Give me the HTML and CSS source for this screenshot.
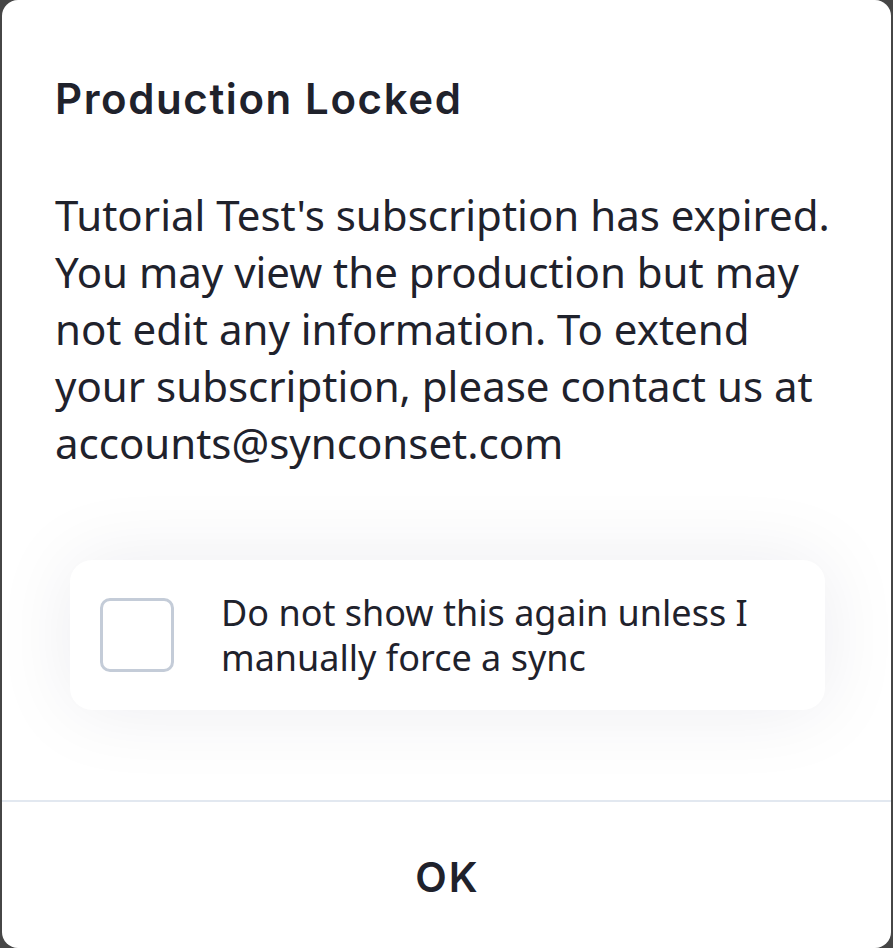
FILE: index.html
```html
<!DOCTYPE html>
<html>
<head>
<meta charset="utf-8">
<link rel="stylesheet" href="styles.css">
</head>
<body>
<div class="dialog">
  <div class="content">
    <h1 class="title">Production Locked</h1>
    <p class="message">Tutorial Test's subscription has expired. You may view the production but may not edit any information. To extend your subscription, please contact us at accounts@synconset.com</p>
    <label class="option">
      <span class="box"></span>
      <span class="option-text">Do not show this again unless I manually force a sync</span>
    </label>
  </div>
  <div class="footer">
    <button class="ok">OK</button>
  </div>
</div>
</body>
</html>
```
FILE: styles.css
```css
html, body {
  margin: 0;
  padding: 0;
  background: #464646;
  height: 948px;
  overflow: hidden;
}
.dialog {
  margin: 0 2px;
  height: 948px;
  background: #fff;
  border-radius: 16px;
  display: flex;
  flex-direction: column;
  overflow: hidden;
}
.content {
  flex: 1;
  padding: 0 48px 0 53px;
}
.title {
  margin: 0;
  padding-top: 74px;
  font-family: Inter, sans-serif;
  font-weight: 600;
  font-size: 42px;
  line-height: 50px;
  letter-spacing: 1.6px;
  color: #1f222c;
}
.message {
  margin: 62px 0 0;
  font-family: "Noto Sans", sans-serif;
  font-size: 42px;
  line-height: 57px;
  color: #1f222c;
}
.option {
  margin: 89px 18px 0 15px;
  background: #fff;
  border-radius: 22px;
  box-shadow: 0 0 80px rgba(20, 30, 60, 0.08);
  display: flex;
  align-items: center;
  gap: 47px;
  padding: 0 30px;
  height: 150px;
}
.box {
  flex: none;
  width: 68px;
  height: 68px;
  border: 3px solid #c4ccd8;
  border-radius: 10px;
}
.option-text {
  font-family: "Noto Sans", sans-serif;
  font-size: 36px;
  line-height: 45px;
  color: #1f222c;
}
.footer {
  border-top: 2px solid #e2e8f0;
  height: 146px;
  display: flex;
  align-items: center;
  justify-content: center;
}
.ok {
  border: 0;
  background: none;
  font-family: Inter, sans-serif;
  font-weight: 600;
  font-size: 41px;
  letter-spacing: 2px;
  color: #1f222c;
  padding: 0 0 0 2px;
  margin-top: 4px;
}
```
